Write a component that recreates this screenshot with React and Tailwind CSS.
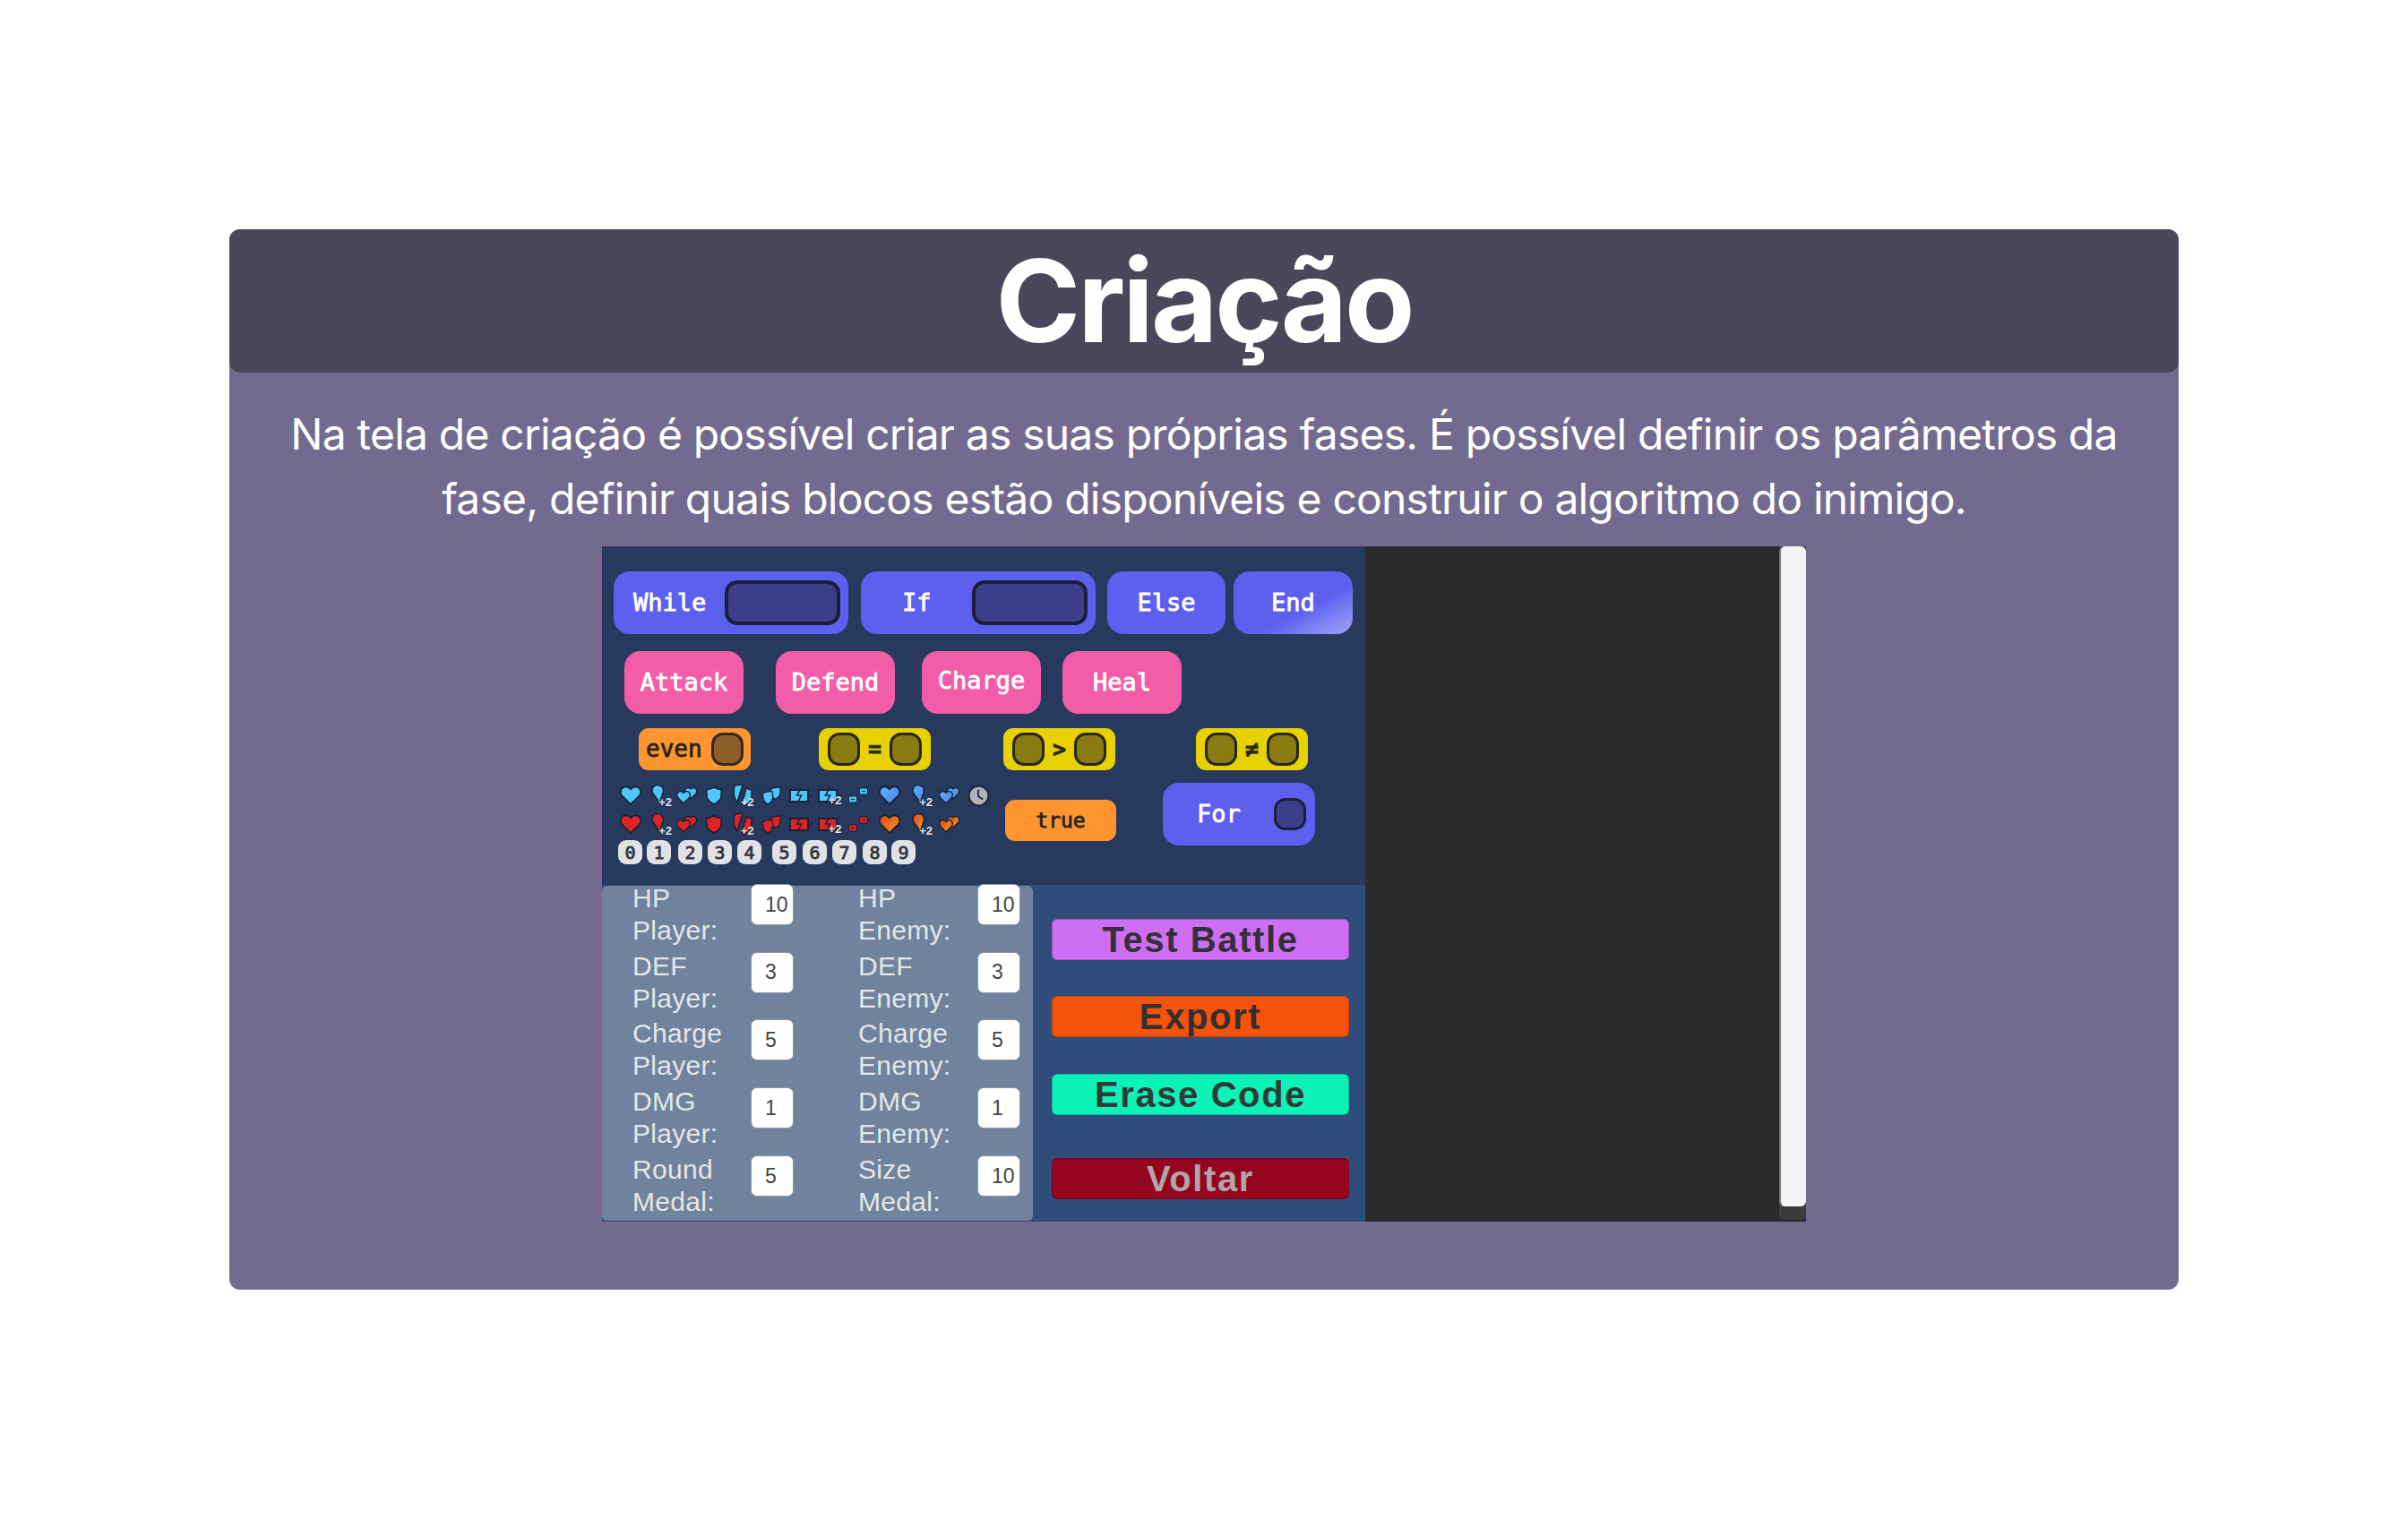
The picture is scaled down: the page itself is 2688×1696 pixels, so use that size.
import React from 'react';

const MONO = 'font-["DejaVu_Sans_Mono",monospace] [-webkit-text-stroke:0.8px_currentColor]';
const EDGE = '#1b2236';

const HEART = 'M12 21.5 L3 12.4 C-0.2 8.6 2.4 3 7.2 3 C9.2 3 11 4.2 12 5.8 C13 4.2 14.8 3 16.8 3 C21.6 3 24.2 8.6 21 12.4 Z';
const SHIELD = 'M12 2 C15 4 18 4.6 21 4.8 L21 12 C21 17 17 20.5 12 23 C7 20.5 3 17 3 12 L3 4.8 C6 4.6 9 4 12 2 Z';

function Plus2() {
  return (
    <span className='absolute -right-[1px] bottom-0 font-["Liberation_Sans",sans-serif] text-[13px] leading-none font-bold text-[#dfe3ea]'>
      +2
    </span>
  );
}

function Gradients() {
  return (
    <svg width="0" height="0" className="absolute">
      <defs>
        <linearGradient id="blueGrad" x1="0" y1="0" x2="1" y2="1">
          <stop offset="0" stopColor="#55b8ff" />
          <stop offset="1" stopColor="#5b78f2" />
        </linearGradient>
        <linearGradient id="orangeGrad" x1="0" y1="0" x2="1" y2="1">
          <stop offset="0" stopColor="#e8401c" />
          <stop offset="1" stopColor="#eea21e" />
        </linearGradient>
      </defs>
    </svg>
  );
}

function Heart({ fill }) {
  return (
    <svg viewBox="0 0 24 24" className="w-[26px] h-[26px]">
      <path d={HEART} fill={fill} stroke={EDGE} strokeWidth="1.8" strokeLinejoin="round" />
    </svg>
  );
}

function HeartDrop({ fill }) {
  return (
    <div className="relative w-[26px] h-[28px]">
      <svg viewBox="0 0 26 28" className="w-[26px] h-[28px]">
        <path d="M11 2.5 C15 2.5 18 5.5 17.5 9.5 C17 13 14.5 16 14 22 L12 22 C11.5 17 6 14 5 10 C4 6 7 2.5 11 2.5 Z" fill={fill} stroke={EDGE} strokeWidth="1.6" />
      </svg>
      <Plus2 />
    </div>
  );
}

function TwoHearts({ fill }) {
  return (
    <svg viewBox="0 0 26 24" className="w-[26px] h-[24px]">
      <path d="M17 16 L11 10 C9 7 11 3.5 14 3.5 C15.4 3.5 16.4 4.2 17 5.2 C17.6 4.2 18.8 3.5 20 3.5 C23.4 3.5 25 7 23 10 Z" fill={fill} stroke={EDGE} strokeWidth="1.5" strokeLinejoin="round" />
      <path d="M9 21 L2.6 14.5 C0.4 11.5 2.2 7.6 5.6 7.6 C7 7.6 8.2 8.3 9 9.6 C9.8 8.3 11 7.6 12.4 7.6 C15.8 7.6 17.6 11.5 15.4 14.5 Z" fill={fill} stroke={EDGE} strokeWidth="1.5" strokeLinejoin="round" />
    </svg>
  );
}

function Shield({ fill }) {
  return (
    <svg viewBox="0 0 24 25" className="w-[22px] h-[25px]">
      <path d={SHIELD} fill={fill} stroke={EDGE} strokeWidth="2" strokeLinejoin="round" />
    </svg>
  );
}

function BrokenShield({ fill }) {
  return (
    <div className="relative w-[24px] h-[28px]">
      <svg viewBox="0 0 24 28" className="w-[24px] h-[28px]">
        <path d="M3 3 L12 2 L6 22 C3 18 2 14 2 10 Z" fill={fill} stroke={EDGE} strokeWidth="1.6" strokeLinejoin="round" />
        <path d="M16 6 L22 8 L22 16 C22 20 19 23 14 26 L11 24 Z" fill={fill} stroke={EDGE} strokeWidth="1.6" strokeLinejoin="round" />
      </svg>
      <Plus2 />
    </div>
  );
}

function TwoShields({ fill }) {
  return (
    <svg viewBox="0 0 26 24" className="w-[24px] h-[22px]">
      <path d="M15 3 L24 2 L24 9 C24 13 21 15 18 17 C15 15 12 13 12 9 L12 5 Z" fill={fill} stroke={EDGE} strokeWidth="1.5" strokeLinejoin="round" />
      <path d="M6 8 L14 7 L15 14 C15 18 12 21 9 23 C5 21 3 18 3 14 L2 10 Z" fill={fill} stroke={EDGE} strokeWidth="1.5" strokeLinejoin="round" />
    </svg>
  );
}

function Battery({ fill, plus }) {
  return (
    <div className="relative w-[28px] h-[24px]">
      <svg viewBox="0 0 28 24" className="w-[28px] h-[24px]">
        <rect x="3" y="6" width="20" height="13" fill={fill} stroke={EDGE} strokeWidth="2" />
        <rect x="25" y="11" width="2" height="3" fill={EDGE} />
        <path d="M15 4 L10.5 12 L15.5 12 L11 21" fill="none" stroke={EDGE} strokeWidth="1.6" />
      </svg>
      {plus && <Plus2 />}
    </div>
  );
}

function SmallBatteries({ fill }) {
  return (
    <svg viewBox="0 0 24 24" className="w-[24px] h-[24px]">
      <rect x="1.5" y="13" width="9" height="7" fill={fill} stroke={EDGE} strokeWidth="1" />
      <path d="M4 16.5 L8 16.5" stroke={EDGE} strokeWidth="1.2" />
      <rect x="13.5" y="4" width="9" height="7" fill={fill} stroke={EDGE} strokeWidth="1" />
      <path d="M16 7.5 L20 7.5" stroke={EDGE} strokeWidth="1.2" />
    </svg>
  );
}

function Clock() {
  return (
    <svg viewBox="0 0 24 24" className="w-[25px] h-[25px]">
      <circle cx="12" cy="12" r="10.5" fill="#aeb4bb" stroke={EDGE} strokeWidth="1.8" />
      <path d="M11.5 5.5 L11.5 12.5 L16.5 16" fill="none" stroke="#2b3240" strokeWidth="2" />
    </svg>
  );
}

function IconCell({ children }) {
  return <div className="flex items-center justify-center h-[32px]">{children}</div>;
}

function IconRow({ main, alt, clock }) {
  return (
    <>
      <IconCell><Heart fill={main} /></IconCell>
      <IconCell><HeartDrop fill={main} /></IconCell>
      <IconCell><TwoHearts fill={main} /></IconCell>
      <IconCell><Shield fill={main} /></IconCell>
      <IconCell><BrokenShield fill={main} /></IconCell>
      <IconCell><TwoShields fill={main} /></IconCell>
      <IconCell><Battery fill={main} /></IconCell>
      <IconCell><Battery fill={main} plus /></IconCell>
      <IconCell><SmallBatteries fill={main} /></IconCell>
      <IconCell><Heart fill={alt} /></IconCell>
      <IconCell><HeartDrop fill={alt} /></IconCell>
      <IconCell><TwoHearts fill={alt} /></IconCell>
      <IconCell>{clock && <Clock />}</IconCell>
    </>
  );
}

function Slot({ className }) {
  return <div className={`${className}`} />;
}

function BlueBlock({ label, children, className = '' }) {
  return (
    <div className={`h-[70px] rounded-[18px] flex items-center bg-[#5d5fef] text-white text-[27px] ${MONO} ${className}`}>
      {label}
      {children}
    </div>
  );
}

function PinkBlock({ label, className = '' }) {
  return (
    <div className={`w-[133px] h-[70px] rounded-[18px] flex items-center justify-center bg-[#f25ca8] text-white text-[27px] ${MONO} ${className}`}>
      {label}
    </div>
  );
}

function Compare({ sign, className = '' }) {
  return (
    <div className={`w-[125px] h-[47px] rounded-[11px] flex items-center justify-between px-[10px] bg-[#e8d100] text-[#2a2a1e] font-bold text-[25px] ${MONO} ${className}`}>
      <Slot className="w-[36px] h-[37px] rounded-[13px] border-[3px] border-[#27261a] bg-[#8a7a12]" />
      {sign}
      <Slot className="w-[36px] h-[37px] rounded-[13px] border-[3px] border-[#27261a] bg-[#8a7a12]" />
    </div>
  );
}

const numberKeys = [
  ['0', 'ml-0'],
  ['1', 'ml-[5px]'],
  ['2', 'ml-[8px]'],
  ['3', 'ml-[6px]'],
  ['4', 'ml-[6px]'],
  ['5', 'ml-[12px]'],
  ['6', 'ml-[7px]'],
  ['7', 'ml-[6px]'],
  ['8', 'ml-[7px]'],
  ['9', 'ml-[5px]'],
];

function Palette() {
  return (
    <div className="h-[378px] bg-[#273a5e] pt-[28px]">
      {/* Controle */}
      <div className="flex pl-[13px]">
        <BlueBlock label="While" className="w-[262px] pl-[22px]">
          <Slot className="w-[129px] h-[50px] ml-auto mr-[9px] rounded-[14px] border-4 border-[#1a1f3a] bg-[#3d3e8c]" />
        </BlueBlock>
        <BlueBlock label="If" className="w-[262px] ml-[14px] pl-[46px]">
          <Slot className="w-[129px] h-[50px] ml-auto mr-[9px] rounded-[14px] border-4 border-[#1a1f3a] bg-[#3d3e8c]" />
        </BlueBlock>
        <BlueBlock label="Else" className="w-[132px] ml-[13px] justify-center" />
        <BlueBlock
          label="End"
          className="w-[133px] ml-[9px] justify-center bg-linear-to-br from-[#5d5fef] from-60% to-[#a3a4f7]"
        />
      </div>

      {/* Acoes */}
      <div className="flex pl-[25px] mt-[19px]">
        <PinkBlock label="Attack" />
        <PinkBlock label="Defend" className="ml-[36px]" />
        <PinkBlock label="Charge" className="ml-[30px] pb-[4px]" />
        <PinkBlock label="Heal" className="ml-[24px]" />
      </div>

      {/* Condicoes */}
      <div className="flex pl-[41px] mt-[16px]">
        <div className={`w-[125px] h-[47px] rounded-[11px] flex items-center pl-[8px] bg-[#ff9530] text-[#2a2418] text-[26px] ${MONO}`}>
          even
          <Slot className="w-[36px] h-[37px] ml-[10px] rounded-[13px] border-[3px] border-[#33281c] bg-[#8c5e2a]" />
        </div>
        <Compare sign="=" className="ml-[76px]" />
        <Compare sign=">" className="ml-[81px]" />
        <Compare sign="≠" className="ml-[90px]" />
      </div>

      {/* Icones, true e for */}
      <div className="flex pl-[16px] mt-[14px]">
        <div className="w-[420px] -mt-[2px]">
          <div className="grid grid-cols-[32px_32px_30px_30px_33px_32px_31px_33px_34px_35px_34px_32px_32px]">
            <IconRow main="#4cc8ff" alt="url(#blueGrad)" clock />
            <IconRow main="#e02424" alt="url(#orangeGrad)" />
          </div>
          <div className={`flex ml-[2px] mt-[2px] text-[#33363d] text-[20px] ${MONO}`}>
            {numberKeys.map(([n, gap]) => (
              <div key={n} className={`w-[27px] h-[27px] rounded-[9px] flex items-center justify-center bg-[#e0e2e6] ${gap}`}>
                {n}
              </div>
            ))}
          </div>
        </div>
        <div className={`w-[124px] h-[46px] ml-[14px] mt-[19px] rounded-[11px] flex items-center justify-center bg-[#ff9530] text-[#2a2418] text-[23px] ${MONO}`}>
          true
        </div>
        <BlueBlock label="For" className="w-[170px] h-[69px] ml-[52px] pl-[38px]">
          <Slot className="w-[36px] h-[36px] ml-auto mr-[10px] rounded-[13px] border-[3px] border-[#1a1f3a] bg-[#3d3e8c]" />
        </BlueBlock>
      </div>
    </div>
  );
}

const fields = [
  ['HP Player:', '10', 'HP Enemy:', '10'],
  ['DEF Player:', '3', 'DEF Enemy:', '3'],
  ['Charge Player:', '5', 'Charge Enemy:', '5'],
  ['DMG Player:', '1', 'DMG Enemy:', '1'],
  ['Round Medal:', '5', 'Size Medal:', '10'],
];

function Field({ label, value, className }) {
  return (
    <div className="flex items-start">
      <div className={`-mt-[4px] text-[30px] tracking-[0.3px] leading-[36px] text-[#e3e7ec] ${className}`}>{label}</div>
      <div className="w-[48px] h-[46px] -mt-[2px] pl-[15px] rounded-[7px] flex items-center bg-white border border-[#8d97a6] text-[23px] text-[#444444]">
        {value}
      </div>
    </div>
  );
}

function GameButton({ label, className }) {
  return (
    <div className={`w-[332px] h-[46px] rounded-[6px] flex items-center justify-center border border-black/20 font-bold text-[40px] tracking-[1.6px] leading-none ${className}`}>
      {label}
    </div>
  );
}

function BottomPanel() {
  return (
    <div className='h-[376px] flex bg-[#304c7a] font-["Liberation_Sans",sans-serif]'>
      <div className="w-[481px] h-[374px] mt-[1px] rounded-[6px] bg-[#71829c] grid grid-cols-[252px_229px] auto-rows-[75.7px]">
        {fields.map(([a, av, b, bv]) => (
          <React.Fragment key={a}>
            <Field label={a} value={av} className="ml-[34px] w-[132px]" />
            <Field label={b} value={bv} className="ml-[34px] w-[133px]" />
          </React.Fragment>
        ))}
      </div>
      <div className="pl-[21px] pt-[38px]">
        <GameButton label="Test Battle" className="bg-[#cf6ef2] text-[#33303a]" />
        <GameButton label="Export" className="mt-[40px] bg-[#f5520c] text-[#33302e]" />
        <GameButton label="Erase Code" className="mt-[41px] bg-[#0cf2b7] text-[#2f3a38]" />
        <GameButton label="Voltar" className="mt-[48px] bg-[#95051f] text-[#b0a6a8]" />
      </div>
    </div>
  );
}

function Scrollbar() {
  return (
    <div className="w-[30px] h-[752px] flex flex-col rounded-b-md bg-[#3c3c3c]">
      <div className="h-[737px] rounded-md bg-[#f5f5f5] border-l-2 border-[#7c7c7c]" />
    </div>
  );
}

function Screenshot() {
  return (
    <div className="w-[1344px] h-[754px] mx-auto mt-[17px] flex bg-[#2b2b2b]">
      <div className="w-[852px]">
        <Palette />
        <BottomPanel />
      </div>
      <div className="flex-1" />
      <Scrollbar />
    </div>
  );
}

export default function App() {
  return (
    <div className='h-[1696px] overflow-hidden bg-white px-[256px] pt-[256px] font-["Inter",sans-serif]'>
      <Gradients />
      <div className="h-[1184px] rounded-xl bg-[#736b8f]">
        <div className="h-[160px] rounded-xl bg-[#4b475b] flex items-center justify-center text-[128px] tracking-[-3px] leading-none font-bold text-white">
          Criação
        </div>
        <p className="mt-[33px] px-12 text-center text-[48px] tracking-[-0.8px] leading-[72px] text-white">
          Na tela de criação é possível criar as suas próprias fases. É possível definir os parâmetros da fase, definir quais blocos estão disponíveis e construir o algoritmo do inimigo.
        </p>
        <Screenshot />
      </div>
    </div>
  );
}
